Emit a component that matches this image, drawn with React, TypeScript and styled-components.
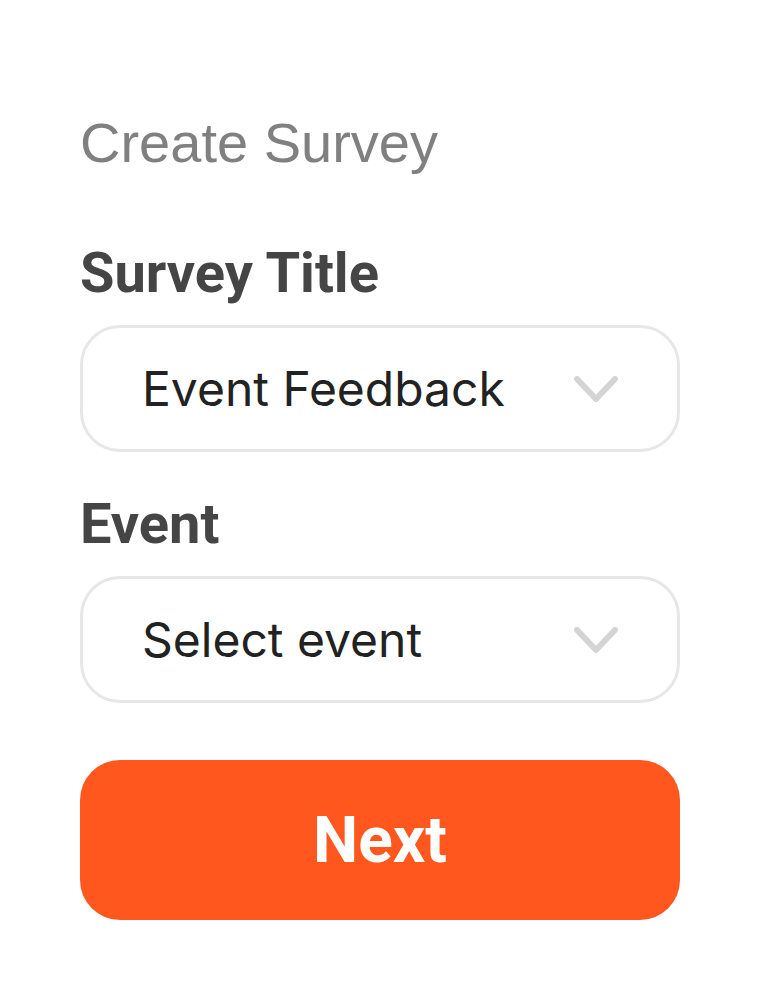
import React from "react";
import styled, { createGlobalStyle } from "styled-components";

const GlobalStyle = createGlobalStyle`
    html, body {
        margin: 0;
        padding: 0;
        background: #ffffff;
    }
`;

const Page = styled.main`
    width: 600px;
    padding: 111px 0 0 80px;
    display: flex;
    flex-direction: column;
`;

const Heading = styled.h1`
    margin: 0;
    font-family: "Liberation Sans", Arial, sans-serif;
    font-weight: 400;
    font-size: 56px;
    line-height: 64px;
    color: #808080;
`;

const Label = styled.label<{ $top: number }>`
    display: block;
    margin: ${(p) => p.$top}px 0 20px;
    font-family: Roboto, "Liberation Sans", sans-serif;
    font-weight: 700;
    font-size: 56px;
    line-height: 64px;
    color: #454545;
`;

const Select = styled.div`
    box-sizing: border-box;
    height: 127px;
    display: flex;
    align-items: center;
    justify-content: space-between;
    padding: 0 59px;
    border: 3px solid #e7e7e7;
    border-radius: 40px;
    background: #fff;
    cursor: pointer;
`;

const SelectText = styled.span`
    font-family: Inter, "Noto Sans", sans-serif;
    font-size: 48px;
    color: #222222;
`;

const Button = styled.button`
    box-sizing: border-box;
    margin-top: 57px;
    height: 160px;
    width: 100%;
    border: none;
    border-radius: 40px;
    background: #ff571d;
    color: #ffffff;
    font-family: Roboto, "Liberation Sans", sans-serif;
    font-weight: 700;
    font-size: 64px;
    cursor: pointer;
`;

const Chevron: React.FC = () => (
    <svg width="44" height="26" viewBox="0 0 44 26" fill="none">
        <path
            d="M3 3 L22 23 L41 3"
            stroke="#d4d4d4"
            strokeWidth="6"
            strokeLinecap="round"
            strokeLinejoin="round"
        />
    </svg>
);

const App: React.FC = () => {
    return (
        <>
            <GlobalStyle />
            <Page>
                <Heading>Create Survey</Heading>
                <Label $top={66}>Survey Title</Label>
                <Select>
                    <SelectText>Event Feedback</SelectText>
                    <Chevron />
                </Select>
                <Label $top={40}>Event</Label>
                <Select>
                    <SelectText>Select event</SelectText>
                    <Chevron />
                </Select>
                <Button>Next</Button>
            </Page>
        </>
    );
};

export default App;
